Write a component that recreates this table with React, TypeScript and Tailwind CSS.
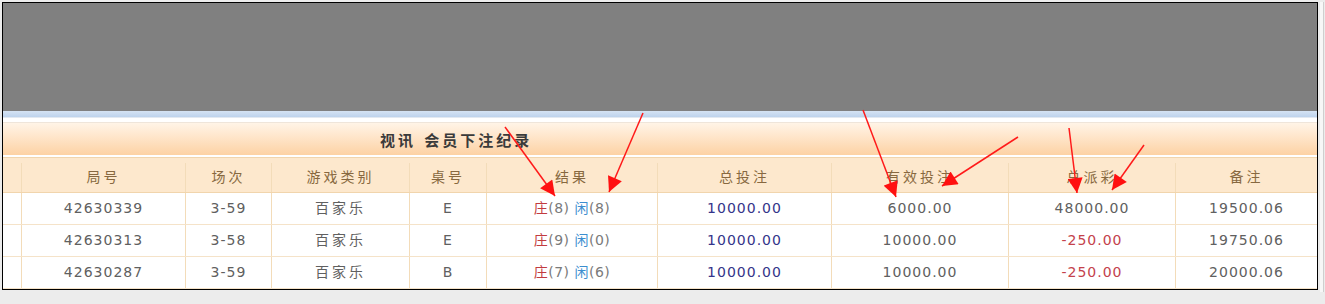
import React from 'react'

type Bet = {
  id: string
  round: string
  game: string
  table: string
  banker: number
  player: number
  total: string
  valid: string
  payout: string
  note: string
}

const bets: Bet[] = [
  { id: '42630339', round: '3-59', game: '百家乐', table: 'E', banker: 8, player: 8, total: '10000.00', valid: '6000.00', payout: '48000.00', note: '19500.06' },
  { id: '42630313', round: '3-58', game: '百家乐', table: 'E', banker: 9, player: 0, total: '10000.00', valid: '10000.00', payout: '-250.00', note: '19750.06' },
  { id: '42630287', round: '3-59', game: '百家乐', table: 'B', banker: 7, player: 6, total: '10000.00', valid: '10000.00', payout: '-250.00', note: '20000.06' },
]

const headers = ['', '局号', '场次', '游戏类别', '桌号', '结果', '总投注', '有效投注', '总派彩', '备注']

const cols = 'grid grid-cols-[18px_164px_86px_138px_77px_171px_174px_177px_167px_142px]'
const font = "font-['DejaVu_Sans','Noto_Sans_CJK_SC',sans-serif]"

// start -> tip of the red annotation arrows
const arrows = [
  [505, 127, 555, 196],
  [643, 113, 609, 192],
  [863, 110, 896, 197],
  [1018, 137, 942, 186],
  [1069, 128, 1077, 193],
  [1144, 145, 1112, 190],
]

const Arrows = () => (
  <svg className="pointer-events-none absolute left-0 top-0" width={1325} height={304}>
    <defs>
      <marker id="head" viewBox="0 0 10 10" refX="10" refY="5" markerWidth="17" markerHeight="15" markerUnits="userSpaceOnUse" orient="auto">
        <path d="M0 0 L10 5 L0 10 z" fill="#ff1010" />
      </marker>
    </defs>
    {arrows.map(([x1, y1, x2, y2], i) => (
      <line key={i} x1={x1} y1={y1} x2={x2} y2={y2} stroke="#ff1a1a" strokeWidth={1.5} markerEnd="url(#head)" />
    ))}
  </svg>
)

const Cell = ({ children, first }: { children?: React.ReactNode; first?: boolean }) => (
  <div className={`flex items-center justify-center ${first ? '' : 'border-l border-[#f3dcb9]'}`}>{children}</div>
)

export default function App() {
  return (
    <div className={`relative h-[304px] w-[1325px] bg-[#ececec] ${font}`}>
      <div className="flex items-start pl-[2px] pt-[2px]">
        <div className="flex h-[288px] w-[1316px] flex-col border border-black bg-white">
          <div className="h-[108px] bg-[#808080]" />
          <div className="h-[6px] bg-gradient-to-b from-[#d5e3f3] to-[#bed3ec]" />
          <div className="h-[6px] border-t border-b border-t-[#e3e9f1] border-b-[#efe5da] bg-white" />
          <div className="flex h-[32px] items-center bg-gradient-to-b from-[#fff4e7] to-[#fdd2a4] pl-[377px] pt-[4px]">
            <span className="text-[15px] font-bold tracking-[3px] text-[#3a3a3a]">视讯 会员下注纪录</span>
          </div>
          <div className="h-[2px] bg-white" />
          <div className={`${cols} h-[36px] border-t border-b border-[#f1d5ad] bg-[#fde8cd] pt-[5px] text-[14px] tracking-[3px] text-[#876840]`}>
            {headers.map((h, i) => (
              <Cell key={i} first={i === 0}>{h}</Cell>
            ))}
          </div>
          {bets.map((b) => (
            <div key={b.id} className={`${cols} h-[32px] border-b border-[#f5e3c9] text-[14px] tracking-[1px] text-[#606060]`}>
              <Cell first />
              <Cell>{b.id}</Cell>
              <Cell>{b.round}</Cell>
              <Cell><span className="tracking-[3px]">{b.game}</span></Cell>
              <Cell>{b.table}</Cell>
              <Cell>
                <span className="tracking-[0.5px]">
                  <span className="text-[#c23b3f]">庄</span>
                  <span className="text-[#7a7a7a]">({b.banker})</span>{' '}
                  <span className="text-[#3c8ecf]">闲</span>
                  <span className="text-[#7a7a7a]">({b.player})</span>
                </span>
              </Cell>
              <Cell><span className="text-[#34348a]">{b.total}</span></Cell>
              <Cell>{b.valid}</Cell>
              <Cell>
                <span className={b.payout.startsWith('-') ? 'text-[#c4424c]' : ''}>{b.payout}</span>
              </Cell>
              <Cell>{b.note}</Cell>
            </div>
          ))}
        </div>
        <div className="ml-[2px] h-[290px] w-[4px] border-r border-[#cfcfcf] bg-[#f7f7f7]" />
      </div>
      <Arrows />
    </div>
  )
}
